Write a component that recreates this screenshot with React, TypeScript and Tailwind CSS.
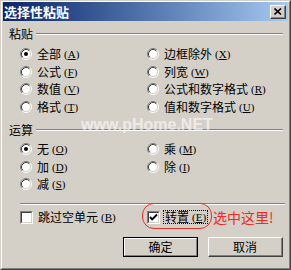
import React from "react";

function Radio({ checked }: { checked?: boolean }) {
  return (
    <svg width="12" height="12" viewBox="0 0 12 12" className="shrink-0">
      <circle cx="6" cy="6" r="4.5" fill="#fff" />
      <path d="M9.89 2.11 A5.5 5.5 0 0 0 2.11 9.89" fill="none" stroke="#808080" />
      <path d="M2.11 9.89 A5.5 5.5 0 0 0 9.89 2.11" fill="none" stroke="#fff" />
      <path d="M9.18 2.82 A4.5 4.5 0 0 0 2.82 9.18" fill="none" stroke="#404040" />
      <path d="M2.82 9.18 A4.5 4.5 0 0 0 9.18 2.82" fill="none" stroke="#d4d0c8" />
      {checked && <circle cx="6" cy="6" r="2" fill="#000" />}
    </svg>
  );
}

function Check({ checked }: { checked?: boolean }) {
  return (
    <div className="w-[13px] h-[13px] shrink-0 border border-t-[#808080] border-l-[#808080] border-r-white border-b-white">
      <div className="w-full h-full bg-white border border-t-[#404040] border-l-[#404040] border-r-[#d4d0c8] border-b-[#d4d0c8] flex items-center justify-center">
        {checked && (
          <svg width="9" height="9" viewBox="0 0 9 9">
            <path d="M1 4 L3.2 6.3 L8 1.5" fill="none" stroke="#000" strokeWidth="1.9" />
          </svg>
        )}
      </div>
    </div>
  );
}

function Key({ k }: { k: string }) {
  return (
    <span className="ml-[3px] text-[11px] font-['Liberation_Serif',serif]">
      (<span className="underline">{k}</span>)
    </span>
  );
}

function Opt({ label, k, checked }: { label: string; k: string; checked?: boolean }) {
  return (
    <div className="flex items-center h-[17.5px]">
      <Radio checked={checked} />
      <span className="ml-[5px] leading-none">{label}</span>
      <Key k={k} />
    </div>
  );
}

function Etched({ className }: { className?: string }) {
  return (
    <div className={`h-[2px] border-t border-t-[#808080] border-b border-b-white ${className ?? ""}`} />
  );
}

function Header({ label }: { label: string }) {
  return (
    <div className="flex items-center h-[14px] pl-[6px] pr-[5px]">
      <span className="leading-none">{label}</span>
      <Etched className="flex-1 ml-[3px]" />
    </div>
  );
}

export default function App() {
  return (
    <div className="relative w-[291px] h-[270px] overflow-hidden bg-[#d4d0c8] font-['Noto_Sans_CJK_SC',sans-serif] text-[12px] text-black border border-t-[#d4d0c8] border-l-[#d4d0c8] border-r-[#404040] border-b-[#404040]">
      <div className="h-full border border-t-white border-l-white border-r-[#808080] border-b-[#808080] px-[1px]">
        <div className="h-[19px] flex items-center justify-between bg-linear-to-r from-[#0a246a] to-[#a6caf0] pl-[1px] pr-[2px]">
          <span className="text-white font-bold text-[13px] leading-none">选择性粘贴</span>
          <div className="w-[16px] h-[14px] border border-t-white border-l-white border-r-[#404040] border-b-[#404040] bg-[#d4d0c8]">
            <div className="w-full h-full border-r border-b border-r-[#808080] border-b-[#808080] flex items-center justify-center">
              <svg width="8" height="7" viewBox="0 0 8 7">
                <path d="M0.5 0.5 L7 6.5 M7 0.5 L0.5 6.5" stroke="#000" strokeWidth="1.6" />
              </svg>
            </div>
          </div>
        </div>

        <div className="mt-[6px]">
          <Header label="粘贴" />
        </div>
        <div className="mt-[4.5px] grid grid-cols-[127px_1fr] pl-[17px]">
          <div>
            <Opt label="全部" k="A" checked />
            <Opt label="公式" k="F" />
            <Opt label="数值" k="V" />
            <Opt label="格式" k="T" />
          </div>
          <div>
            <Opt label="边框除外" k="X" />
            <Opt label="列宽" k="W" />
            <Opt label="公式和数字格式" k="R" />
            <Opt label="值和数字格式" k="U" />
          </div>
        </div>

        <div className="mt-[7.5px]">
          <Header label="运算" />
        </div>
        <div className="mt-[3.5px] grid grid-cols-[127px_1fr] pl-[17px]">
          <div>
            <Opt label="无" k="O" checked />
            <Opt label="加" k="D" />
            <Opt label="减" k="S" />
          </div>
          <div>
            <Opt label="乘" k="M" />
            <Opt label="除" k="I" />
          </div>
        </div>

        <Etched className="mt-[10px] ml-[17px] mr-[3px]" />

        <div className="mt-[4px] h-[16px] grid grid-cols-[127px_1fr] pl-[17px] items-center">
          <div className="flex items-center">
            <Check />
            <span className="ml-[5px] leading-none">跳过空单元</span>
            <Key k="B" />
          </div>
          <div className="relative flex items-center">
            <div className="absolute left-[-5px] top-[-7px] w-[70px] h-[26px] rounded-[12px] border border-[#e3302c]" />
            <Check checked />
            <span className="ml-[3px] px-[1px] h-[14px] flex items-center border border-dotted border-black leading-none">
              转置
              <Key k="E" />
            </span>
            <span className="ml-[5px] text-[14px] leading-none text-[#ee2a24]">选中这里!</span>
          </div>
        </div>

        <div className="mt-[12px] flex justify-end gap-[10px] pr-[5px]">
          <div className="w-[75px] h-[20px] border border-black">
            <div className="h-full border border-t-white border-l-white border-r-[#808080] border-b-[#808080] flex items-center justify-center leading-none">
              确定
            </div>
          </div>
          <div className="w-[75px] h-[20px] border border-t-white border-l-white border-r-[#404040] border-b-[#404040]">
            <div className="h-full border-r border-b border-r-[#808080] border-b-[#808080] flex items-center justify-center leading-none">
              取消
            </div>
          </div>
        </div>
      </div>

      <div className="absolute left-[80px] top-[116px] text-[16px] font-bold font-['Liberation_Sans',sans-serif] text-white/60 leading-none pointer-events-none">
        www.pHome.NET
      </div>
    </div>
  );
}
